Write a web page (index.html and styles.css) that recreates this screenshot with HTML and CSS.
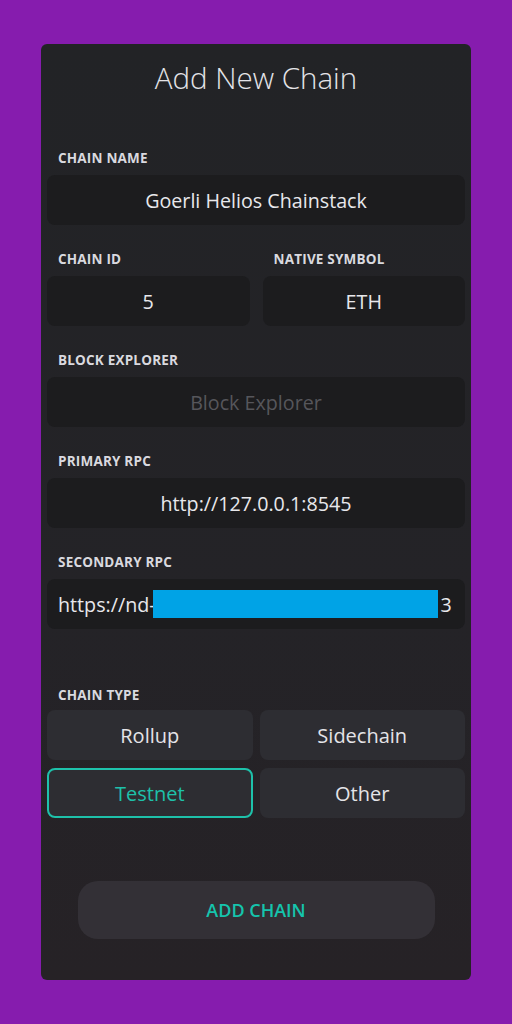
FILE: index.html
```html
<!DOCTYPE html>
<html lang="en">
<head>
    <meta charset="UTF-8">
    <meta name="viewport" content="width=device-width, initial-scale=1.0">
    <title>Add New Chain</title>
    <link rel="stylesheet" href="styles.css">
</head>
<body>
    <div class="card">
        <h1 class="title">Add New Chain</h1>

        <div class="field">
            <label class="label" for="chainName">Chain Name</label>
            <input class="input" type="text" id="chainName" value="Goerli Helios Chainstack">
        </div>

        <div class="field-row">
            <div class="field">
                <label class="label" for="chainId">Chain ID</label>
                <input class="input" type="text" id="chainId" value="5">
            </div>
            <div class="field">
                <label class="label" for="symbol">Native Symbol</label>
                <input class="input" type="text" id="symbol" value="ETH">
            </div>
        </div>

        <div class="field">
            <label class="label" for="explorer">Block Explorer</label>
            <input class="input" type="text" id="explorer" placeholder="Block Explorer">
        </div>

        <div class="field">
            <label class="label" for="primaryRpc">Primary RPC</label>
            <input class="input" type="text" id="primaryRpc" value="http://127.0.0.1:8545">
        </div>

        <div class="field">
            <label class="label">Secondary RPC</label>
            <div class="input input-left">https://nd-<span class="redacted"></span>3</div>
        </div>

        <div class="field chain-type">
            <label class="label">Chain Type</label>
            <div class="type-grid">
                <button class="type-btn">Rollup</button>
                <button class="type-btn">Sidechain</button>
                <button class="type-btn selected">Testnet</button>
                <button class="type-btn">Other</button>
            </div>
        </div>

        <button class="add-btn">ADD CHAIN</button>
    </div>
</body>
</html>
```

FILE: styles.css
```css
body {
    margin: 0;
    background-color: #861cae;
    font-family: "Open Sans", Arial, sans-serif;
}

.card {
    box-sizing: border-box;
    width: 430px;
    height: 936px;
    margin: 44px 0 0 41px;
    padding: 17px 6px 0 6px;
    border-radius: 6px;
    background: linear-gradient(180deg, #222326 0%, #242327 60%, #262226 100%);
    display: flex;
    flex-direction: column;
}

.title {
    margin: 0 0 55px 0;
    font-size: 29.5px;
    font-weight: 300;
    line-height: 34px;
    color: #e4e4e8;
    text-align: center;
}

.field {
    display: flex;
    flex-direction: column;
    margin-bottom: 26px;
}

.field-row {
    display: grid;
    grid-template-columns: 1fr 1fr;
    column-gap: 13px;
}

.label {
    display: block;
    padding-left: 11px;
    margin-bottom: 9px;
    font-size: 13.5px;
    font-weight: 700;
    line-height: 16px;
    letter-spacing: 0.2px;
    text-transform: uppercase;
    color: #d9d9df;
}

.input {
    box-sizing: border-box;
    width: 100%;
    height: 50px;
    padding: 0 11px;
    border: none;
    border-radius: 8px;
    background-color: #1c1c1e;
    font-family: inherit;
    font-size: 19.7px;
    color: #e8e8ec;
    text-align: center;
    outline: none;
}

.input::placeholder {
    color: #56565b;
}

.input-left {
    display: flex;
    align-items: center;
    text-align: left;
    white-space: nowrap;
}

.redacted {
    display: inline-block;
    flex: none;
    width: 285px;
    height: 28px;
    margin-left: -3px;
    margin-right: 3px;
    background-color: #00a3e6;
}

.chain-type {
    margin-top: 32px;
}

.chain-type .label {
    margin-bottom: 7px;
}

.type-grid {
    display: grid;
    grid-template-columns: 1fr 1fr;
    gap: 8px 7px;
}

.type-btn {
    box-sizing: border-box;
    height: 50px;
    border: 2px solid transparent;
    border-radius: 8px;
    background-color: #2d2d32;
    font-family: inherit;
    font-size: 20px;
    color: #e4e4e8;
    cursor: pointer;
}

.type-btn.selected {
    border-color: #1ec1aa;
    color: #1ec1aa;
}

.add-btn {
    align-self: center;
    width: 357px;
    height: 58px;
    margin-top: 37px;
    border: none;
    border-radius: 20px;
    background-color: #333036;
    font-family: inherit;
    font-size: 18px;
    font-weight: 600;
    color: #15c4ad;
    cursor: pointer;
}
```
